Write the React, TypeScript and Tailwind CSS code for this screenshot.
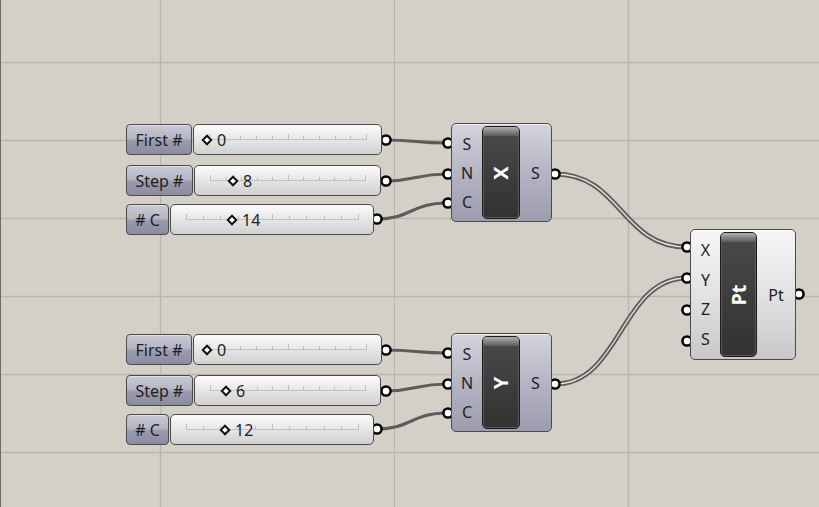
import React from 'react';

type Slider = {
  label: string;
  value: string;
  top: number;
  labelW: number;
  bodyW: number;
  marker: number;
};

type Param = { name: string };

const sliders: Slider[] = [
  { label: 'First #', value: '0', top: 124, labelW: 66, bodyW: 189, marker: 15 },
  { label: 'Step #', value: '8', top: 165, labelW: 67, bodyW: 187, marker: 40 },
  { label: '# C', value: '14', top: 204, labelW: 43, bodyW: 204, marker: 63 },
  { label: 'First #', value: '0', top: 334, labelW: 66, bodyW: 189, marker: 15 },
  { label: 'Step #', value: '6', top: 375, labelW: 67, bodyW: 187, marker: 33 },
  { label: '# C', value: '12', top: 414, labelW: 43, bodyW: 204, marker: 56 },
];

const wire = (x0: number, y0: number, x1: number, y1: number) => {
  const d = (x1 - x0) * 0.5;
  return `M${x0} ${y0} C${x0 + d} ${y0} ${x1 - d} ${y1} ${x1} ${y1}`;
};

const singleWires = [
  [385, 140, 447, 143],
  [385, 181, 447, 174],
  [376, 219, 447, 203],
  [385, 350, 447, 353],
  [385, 391, 447, 384],
  [376, 429, 447, 413],
];

const doubleWires = [
  [555, 174, 687, 247],
  [555, 384, 687, 278],
];

const grips = [
  [386, 140], [386, 181], [377, 219],
  [386, 350], [386, 391], [377, 429],
  [448, 143], [448, 174], [448, 203], [555, 174],
  [448, 353], [448, 384], [448, 413], [555, 384],
  [687, 247], [687, 278], [687, 310], [687, 341], [799, 294],
];

const Track: React.FC<{ width: number }> = ({ width }) => {
  const len = width - 30;
  const ticks = Array.from({ length: 11 }, (_, i) => i);
  return (
    <svg className="absolute left-0 top-0" width={width} height={29}>
      <line x1={15} y1={14.5} x2={15 + len} y2={14.5} stroke="#c2c2c2" strokeWidth={1} />
      {ticks.map(i => {
        const x = Math.round(15 + (len * i) / 10) + 0.5;
        const tall = i === 0 || i === 5 || i === 10;
        return (
          <line
            key={i}
            x1={x}
            x2={x}
            y1={tall ? 9 : 11}
            y2={tall ? 15 : 15}
            stroke="#bdbdbd"
            strokeWidth={1}
          />
        );
      })}
    </svg>
  );
};

const SliderNode: React.FC<{ s: Slider }> = ({ s }) => (
  <div className="absolute left-[126px] flex gap-px h-[31px]" style={{ top: s.top }}>
    <div
      className="h-full flex items-center justify-center rounded-[4px] border border-[#4a4a4a] bg-[linear-gradient(to_bottom,#cacad4_0%,#b6b6c4_45%,#9a9aae_55%,#8c8ca0_100%)] text-[16px] text-[#1e1e1e] shadow-[inset_0_1px_0_#e0e0e8]"
      style={{ width: s.labelW }}
    >
      {s.label}
    </div>
    <div
      className="relative h-full rounded-[5px] border border-[#4a4a4a] bg-gradient-to-b from-[#fcfcfc] to-[#d0d0d0]"
      style={{ width: s.bodyW }}
    >
      <Track width={s.bodyW - 2} />
      <div className="absolute top-0 h-full flex items-center gap-[6px]" style={{ left: s.marker - 6 }}>
        <span className="block w-[8px] h-[8px] rotate-45 border-2 border-[#111] bg-white" />
        <span className="text-[16px] text-[#1e1e1e] leading-none">{s.value}</span>
      </div>
    </div>
  </div>
);

const Bar: React.FC<{ text: string }> = ({ text }) => (
  <div className="relative h-full rounded-[5px] border border-[#1a1a1a] bg-gradient-to-b from-[#4a4a4a] to-[#323232] overflow-hidden flex items-center justify-center shadow-[inset_0_0_0_1px_#5a5a5a]">
    <div className="absolute left-0 top-0 w-full h-[9px] bg-gradient-to-b from-[#b0b0b0] to-[#5c5c5c]" />
    <span className="-rotate-90 text-white font-bold text-[20px] leading-none">{text}</span>
  </div>
);

const Component: React.FC<{
  left: number;
  top: number;
  width: number;
  height: number;
  inW: number;
  barW: number;
  inputs: Param[];
  output: string;
  icon: string;
  tone: 'violet' | 'white';
}> = ({ left, top, width, height, inW, barW, inputs, output, icon, tone }) => (
  <div
    className={
      'absolute flex rounded-[5px] border border-[#4a4a4a] py-[2px] ' +
      (tone === 'violet'
        ? 'bg-gradient-to-b from-[#d4d4de] via-[#b4b4c4] to-[#9c9cae] shadow-[inset_0_1px_0_#eeeef4]'
        : 'bg-gradient-to-b from-[#f6f6f6] via-[#e2e2e2] to-[#c8c8c8] shadow-[inset_0_1px_0_#ffffff]')
    }
    style={{ left, top, width, height }}
  >
    <div className="flex flex-col justify-around py-[3px] text-[16px] text-[#1e1e1e]" style={{ width: inW - 1 }}>
      {inputs.map(p => (
        <div key={p.name} className="flex-1 flex items-center justify-center leading-none">
          {p.name}
        </div>
      ))}
    </div>
    <div style={{ width: barW }} className="h-full">
      <Bar text={icon} />
    </div>
    <div className="flex-1 flex items-center justify-center text-[16px] text-[#1e1e1e]">{output}</div>
  </div>
);

const App: React.FC = () => {
  const hLines = [62, 140, 218, 296, 374, 452];
  const vLines = [160, 394, 628];

  return (
    <div className="relative w-[819px] h-[507px] overflow-hidden bg-[#d4d0c8] font-['Noto_Sans',sans-serif]">
      {/* canvas grid */}
      <svg className="absolute inset-0" width={819} height={507}>
        {hLines.map(y => (
          <line key={y} x1={0} x2={819} y1={y + 0.5} y2={y + 0.5} stroke="#bab6ae" strokeWidth={1.5} />
        ))}
        {vLines.map(x => (
          <line key={x} x1={x + 0.5} x2={x + 0.5} y1={0} y2={507} stroke="#bab6ae" strokeWidth={x === 394 ? 1 : 1.5} />
        ))}
        <line x1={0.5} x2={0.5} y1={0} y2={507} stroke="#6a6a6a" strokeWidth={1} />
      </svg>

      {/* wires + grips */}
      <svg className="absolute inset-0" width={819} height={507} fill="none">
        {singleWires.map(([a, b, c, d], i) => (
          <path key={i} d={wire(a, b, c, d)} stroke="#5c5c5c" strokeWidth={3.2} />
        ))}
        {doubleWires.map(([a, b, c, d], i) => (
          <g key={i}>
            <path d={wire(a, b, c, d)} stroke="#5c5c5c" strokeWidth={5} />
            <path d={wire(a, b, c, d)} stroke="#e4e2dc" strokeWidth={1.3} />
          </g>
        ))}
        {grips.map(([x, y], i) => (
          <circle key={i} cx={x} cy={y} r={4.6} fill="#ffffff" stroke="#000000" strokeWidth={2.5} />
        ))}
      </svg>

      {sliders.map((s, i) => (
        <SliderNode key={i} s={s} />
      ))}

      <Component
        left={451}
        top={123}
        width={101}
        height={99}
        inW={31}
        barW={38}
        inputs={[{ name: 'S' }, { name: 'N' }, { name: 'C' }]}
        output="S"
        icon="X"
        tone="violet"
      />
      <Component
        left={451}
        top={333}
        width={101}
        height={99}
        inW={31}
        barW={38}
        inputs={[{ name: 'S' }, { name: 'N' }, { name: 'C' }]}
        output="S"
        icon="Y"
        tone="violet"
      />
      <Component
        left={690}
        top={229}
        width={106}
        height={131}
        inW={30}
        barW={37}
        inputs={[{ name: 'X' }, { name: 'Y' }, { name: 'Z' }, { name: 'S' }]}
        output="Pt"
        icon="Pt"
        tone="white"
      />
    </div>
  );
};

export default App;
